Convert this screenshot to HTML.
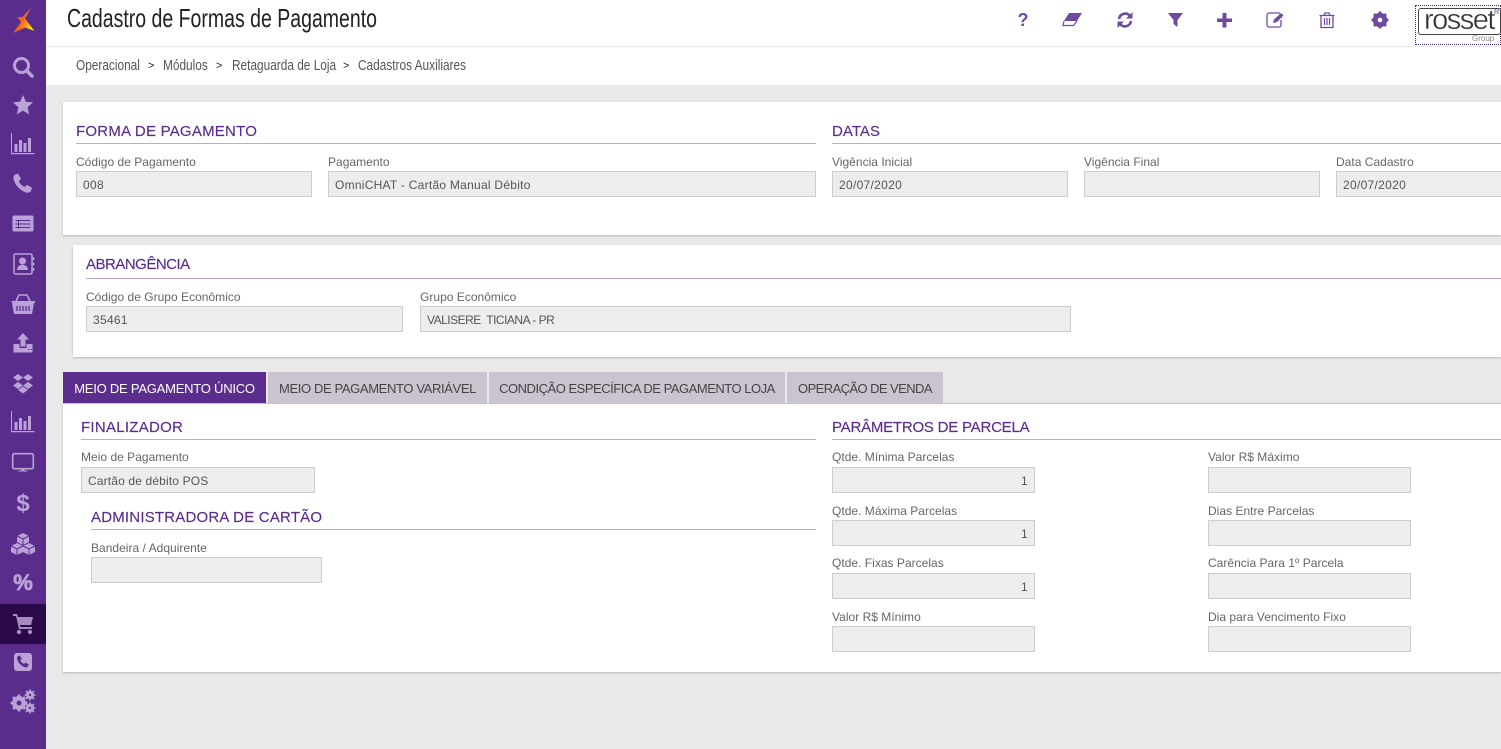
<!DOCTYPE html>
<html lang="pt-BR">
<head>
<meta charset="utf-8">
<title>Cadastro de Formas de Pagamento</title>
<style>
html,body{margin:0;padding:0;width:1501px;height:749px;overflow:hidden;background:#e9e9e9;font-family:"Liberation Sans",sans-serif}
#root{position:relative;width:1501px;height:749px;overflow:hidden}
.a{position:absolute;box-sizing:border-box;white-space:nowrap}
.side{left:0;top:0;width:46px;height:749px;background:#5a2d8c}
.act{left:0;top:604px;width:46px;height:40px;background:#2b0a4b}
.card{background:#fff;box-shadow:0 1px 2px rgba(0,0,0,.22)}
.h{font-size:15px;line-height:18px;color:#5b2d8c;height:18px;-webkit-text-stroke:.15px #5b2d8c}
.ln{height:1px;background:#c0aad4}
.l{font-size:12px;line-height:14px;color:#666;height:14px;letter-spacing:.02px}
.i{height:26px;background:#ededed;border:1px solid #ccc;font-size:12px;line-height:26px;color:#555;padding-left:6px;letter-spacing:.3px}
.r{text-align:right;padding:0 6px 0 0}
.tab{top:372px;height:31px;background:#cbc3d0;color:#444;font-size:13px;line-height:33px;text-align:center}
.bc{top:58px;font-size:15px;line-height:16px;color:#555;transform:scaleX(.79);transform-origin:0 0}
.gt{top:58px;font-size:11px;line-height:16px;color:#222}
svg{position:absolute;left:0;top:0;overflow:visible}
</style>
</head>
<body>
<div id="root">
<div class="a" style="left:46px;top:0;width:1455px;height:85px;background:#fff"></div>
<div class="a" style="left:46px;top:46px;width:1455px;height:1px;background:#eaeaea"></div>
<div class="a" style="left:67px;top:3px;font-size:26px;line-height:30px;color:#222;transform:scaleX(.75);transform-origin:0 0">Cadastro de Formas de Pagamento</div>

<div class="a bc" style="left:76px">Operacional</div><div class="a gt" style="left:148px">&gt;</div>
<div class="a bc" style="left:163px">Módulos</div><div class="a gt" style="left:216px">&gt;</div>
<div class="a bc" style="left:232px">Retaguarda de Loja</div><div class="a gt" style="left:343px">&gt;</div>
<div class="a bc" style="left:358px">Cadastros Auxiliares</div>

<!-- card 1 -->
<div class="a card" style="left:63px;top:102px;width:1438px;height:133px"></div>
<div class="a h" style="left:76px;top:123px;letter-spacing:.23px">FORMA DE PAGAMENTO</div>
<div class="a ln" style="left:76px;top:143px;width:740px"></div>
<div class="a h" style="left:832px;top:123px;letter-spacing:.05px">DATAS</div>
<div class="a ln" style="left:832px;top:143px;width:669px"></div>
<div class="a l" style="left:76px;top:155px">Código de Pagamento</div>
<div class="a i" style="left:76px;top:171px;width:236px">008</div>
<div class="a l" style="left:328px;top:155px">Pagamento</div>
<div class="a i" style="left:328px;top:171px;width:488px;letter-spacing:.26px">OmniCHAT - Cartão Manual Débito</div>
<div class="a l" style="left:832px;top:155px">Vigência Inicial</div>
<div class="a i" style="left:832px;top:171px;width:236px">20/07/2020</div>
<div class="a l" style="left:1084px;top:155px">Vigência Final</div>
<div class="a i" style="left:1084px;top:171px;width:236px"></div>
<div class="a l" style="left:1336px;top:155px">Data Cadastro</div>
<div class="a i" style="left:1336px;top:171px;width:180px">20/07/2020</div>

<!-- card 2 -->
<div class="a card" style="left:73px;top:245px;width:1428px;height:112px"></div>
<div class="a h" style="left:86px;top:256px;letter-spacing:-.5px">ABRANGÊNCIA</div>
<div class="a ln" style="left:86px;top:278px;width:1415px"></div>
<div class="a l" style="left:86px;top:290px">Código de Grupo Econômico</div>
<div class="a i" style="left:86px;top:306px;width:317px">35461</div>
<div class="a l" style="left:420px;top:290px">Grupo Econômico</div>
<div class="a i" style="left:420px;top:306px;width:651px;letter-spacing:-.5px">VALISERE&nbsp; TICIANA - PR</div>

<!-- tabs -->
<div class="a card" style="left:63px;top:403px;width:1438px;height:269px"></div>
<div class="a" style="left:63px;top:403px;width:1438px;height:1px;background:#c9bfd3"></div>
<div class="a tab" style="left:63px;width:203px;background:#5b2d8c;color:#fff;letter-spacing:-.23px">MEIO DE PAGAMENTO ÚNICO</div>
<div class="a tab" style="left:268px;width:219px;letter-spacing:-.37px">MEIO DE PAGAMENTO VARIÁVEL</div>
<div class="a tab" style="left:489px;width:296px;letter-spacing:-.48px">CONDIÇÃO ESPECÍFICA DE PAGAMENTO LOJA</div>
<div class="a tab" style="left:787px;width:156px;letter-spacing:-.58px">OPERAÇÃO DE VENDA</div>

<!-- finalizador -->
<div class="a h" style="left:81px;top:419px;letter-spacing:.27px">FINALIZADOR</div>
<div class="a ln" style="left:81px;top:439px;width:735px"></div>
<div class="a l" style="left:81px;top:450px">Meio de Pagamento</div>
<div class="a i" style="left:81px;top:467px;width:234px;letter-spacing:.15px">Cartão de débito POS</div>
<div class="a h" style="left:91px;top:509px;letter-spacing:.2px">ADMINISTRADORA DE CARTÃO</div>
<div class="a ln" style="left:91px;top:529px;width:725px"></div>
<div class="a l" style="left:91px;top:541px">Bandeira / Adquirente</div>
<div class="a i" style="left:91px;top:557px;width:231px"></div>

<!-- parametros -->
<div class="a h" style="left:832px;top:419px;letter-spacing:-.22px">PARÂMETROS DE PARCELA</div>
<div class="a ln" style="left:832px;top:439px;width:669px"></div>
<div class="a l" style="left:832px;top:450px">Qtde. Mínima Parcelas</div>
<div class="a i r" style="left:832px;top:467px;width:203px">1</div>
<div class="a l" style="left:832px;top:504px">Qtde. Máxima Parcelas</div>
<div class="a i r" style="left:832px;top:520px;width:203px">1</div>
<div class="a l" style="left:832px;top:556px">Qtde. Fixas Parcelas</div>
<div class="a i r" style="left:832px;top:573px;width:203px">1</div>
<div class="a l" style="left:832px;top:610px">Valor R$ Mínimo</div>
<div class="a i" style="left:832px;top:626px;width:203px"></div>
<div class="a l" style="left:1208px;top:450px">Valor R$ Máximo</div>
<div class="a i" style="left:1208px;top:467px;width:203px"></div>
<div class="a l" style="left:1208px;top:504px">Dias Entre Parcelas</div>
<div class="a i" style="left:1208px;top:520px;width:203px"></div>
<div class="a l" style="left:1208px;top:556px">Carência Para 1º Parcela</div>
<div class="a i" style="left:1208px;top:573px;width:203px"></div>
<div class="a l" style="left:1208px;top:610px">Dia para Vencimento Fixo</div>
<div class="a i" style="left:1208px;top:626px;width:203px"></div>

<!-- rosset -->
<div class="a" style="left:1415px;top:5px;width:86px;height:40px;border:1px dotted #3d2a6e"></div>
<div class="a" style="left:1418px;top:8px;width:83px;height:27px;border:1px solid #444;border-radius:3px;background:#fff"></div>
<div class="a" style="left:1424px;top:4px;font-size:29px;line-height:32px;color:#333;letter-spacing:-1.5px;-webkit-text-stroke:.4px #fff">rosset</div>
<div class="a" style="left:1494px;top:9px;font-size:7px;line-height:7px;color:#333">®</div>
<div class="a" style="left:1472px;top:34px;font-size:8px;line-height:9px;color:#888">Group</div>

<!-- sidebar -->
<div class="a side"></div>
<div class="a act"></div>
<svg width="1501" height="749" viewBox="0 0 1501 749">
<defs><linearGradient id="lg" x1="0" y1="0" x2="1" y2=".55"><stop offset="0" stop-color="#ee2a1c"/><stop offset=".55" stop-color="#f9641a"/><stop offset="1" stop-color="#fbdc00"/></linearGradient></defs>
<!-- logo -->
<path d="M31 8 L25 18.500 L34.500 31 L25 27.500 L13 33 L21 22 L17 17 L22.500 17 Z" fill="url(#lg)"/>
<g fill="#b9a3d6" stroke="#b9a3d6">
<g transform="translate(23,67)" fill="none" stroke-linecap="round"><circle cx="-1.5" cy="-1.5" r="7" stroke-width="3"/><path d="M4 4L9 9" stroke-width="3.6"/></g>
<path transform="translate(23,105)" stroke="none" d="M0-10L2.9-3.2 10-2.6 4.6 2.2 6.2 9.4 0 5.6-6.2 9.4-4.6 2.2-10-2.6-2.9-3.2Z"/>
<g id="ch" transform="translate(23,145)" stroke="none"><path d="M-12-12h1v20h22.500v1.200h-23.500z"/><rect x="-8.500" y="-1" width="3" height="8"/><rect x="-4" y="-5" width="3" height="12"/><rect x="0.500" y="-2" width="3" height="9"/><rect x="5" y="-7" width="3" height="14"/></g>
<path transform="translate(23,184)" stroke="none" d="M-8-9.500l3-1 3 5.500-2.200 2c1 2.800 3 4.800 6 6l2-2.200 5.200 3-1 3.200c-1 1.500-3 2-5 1.500C-3 6.500-8 1-9.500-5c-.3-2 .2-3.500 1.500-4.500z"/>
<g transform="translate(23,224)"><rect x="-10.500" y="-8.500" width="21" height="16" rx="1.500" stroke="none"/><path d="M-7.500-3.500h15M-7.500 0h15M-7.500 3.500h15M-4.500-3.500v8" stroke="#5a2d8c" stroke-width="1" fill="none"/></g>
<g transform="translate(23,264)"><rect x="-9" y="-10" width="18" height="20" rx="1.500" fill="none" stroke-width="1.500"/><circle cx="-.500" cy="-3" r="3.500" stroke="none"/><path d="M-6 6c0-7 11-7 11 0z" stroke="none"/><path d="M10.500-7v3M10.500-1.500v3M10.500 4v3" stroke-width="1.500" fill="none"/></g>
<g transform="translate(23,304)"><path d="M-12-3h24v2h-1.500L-9.500-1h-1z" stroke="none"/><path d="M-11-1h22l-2 11h-18z" stroke="none"/><path d="M-7-3L-4-9h8L7-3" fill="none" stroke-width="1.600"/><path d="M-6 2v5M-3 2v5M0 2v5M3 2v5M6 2v5" stroke="#5a2d8c" stroke-width="1.300" fill="none"/></g>
<g transform="translate(23,343)" stroke="none"><path d="M0-10l6 6.500h-3.500v7h-5v-7H-6z"/><path d="M-9.500 1h6v4h7V1h6v8.500h-19z"/><path d="M5 6.500h1.500M8 6.500h1" stroke="#5a2d8c" stroke-width="1" fill="none"/></g>
<path transform="translate(23,383)" stroke="none" d="M-5-9L0-5.500-5-2-10-5.500zM5-9L10-5.500 5-2 0-5.500zM-5-1L0 2.500-5 6-10 2.500zM5-1L10 2.500 5 6 0 2.500zM0 3.500L5 7 0 10.500-5 7z"/>
<g transform="translate(23,423)" stroke="none"><path d="M-12-12h1v20h22.500v1.200h-23.500z"/><rect x="-8.500" y="-1" width="3" height="8"/><rect x="-4" y="-5" width="3" height="12"/><rect x="0.500" y="-2" width="3" height="9"/><rect x="5" y="-7" width="3" height="14"/></g>
<g transform="translate(23,462)"><rect x="-10.300" y="-8.300" width="20.600" height="15" rx="1.500" fill="none" stroke-width="1.600"/><path d="M-1.500 7h3v1.500h3v1h-9v-1h3z" stroke="none"/></g>
<path transform="translate(23,543)" stroke="none" d="M0-10L6-7V-1L0 2-6-1V-7ZM-6 0L0 3V9L-6 12-12 9V3ZM6 0L12 3V9L6 12 0 9V3Z"/>
<path transform="translate(23,543)" d="M-6-7L0-4 6-7M0-4v6M-12 3l6 3 6-3M-6 6v6M0 3l6 3 6-3M6 6v6" stroke="#5a2d8c" stroke-width="1" fill="none"/>
<g fill="#a38dbc"><path transform="translate(23,623)" stroke="none" d="M-10-9h4l1 3h15l-2 8H-3l.5 2H9v2H-4L-7-7h-3z"/><circle cx="19" cy="632" r="2.200" stroke="none"/><circle cx="30" cy="632" r="2.200" stroke="none"/></g>
<g transform="translate(23,662)"><rect x="-9" y="-9" width="18" height="18" rx="3" stroke="none"/><path transform="scale(.62)" fill="#5a2d8c" stroke="none" d="M-8-9.500l3-1 3 5.500-2.200 2c1 2.800 3 4.800 6 6l2-2.200 5.200 3-1 3.200c-1 1.500-3 2-5 1.500C-3 6.500-8 1-9.500-5c-.3-2 .2-3.500 1.500-4.500z"/></g>
<g transform="translate(19,703)"><circle r="5.200" fill="none" stroke-width="3.500"/><path d="M0-8.500v17M-8.500 0h17M-6-6l12 12M6-6L-6 6" stroke-width="2.600" fill="none"/><circle r="2.500" fill="#5a2d8c" stroke="none"/></g>
<g transform="translate(30,695)"><circle r="3" fill="none" stroke-width="2.200"/><path d="M0-5.500v11M-5.500 0h11M-4-4l8 8M4-4l-8 8" stroke-width="1.600" fill="none"/><circle r="1.200" fill="#5a2d8c" stroke="none"/></g>
<g transform="translate(30,708)"><circle r="3" fill="none" stroke-width="2.200"/><path d="M0-5.500v11M-5.500 0h11M-4-4l8 8M4-4l-8 8" stroke-width="1.600" fill="none"/><circle r="1.200" fill="#5a2d8c" stroke="none"/></g>
</g>
<text x="23" y="511" font-family="Liberation Sans" font-weight="700" font-size="24" text-anchor="middle" fill="#b9a3d6">$</text>
<text x="23" y="590" font-family="Liberation Sans" font-weight="700" font-size="22" text-anchor="middle" fill="#b9a3d6" stroke="#b9a3d6" stroke-width=".7">%</text>

<!-- toolbar -->
<g fill="#6f4a9f" stroke="none">
<text x="1023" y="26" font-family="Liberation Sans" font-weight="700" font-size="18" text-anchor="middle">?</text>
<path d="M1069 13H1082L1077 21H1064Z"/><path d="M1064 21L1063 25.500H1073.500L1077 21" fill="none" stroke="#6f4a9f" stroke-width="1.200"/>
<g transform="translate(1125,20)" fill="none" stroke="#6f4a9f" stroke-width="2.600"><path d="M-6-1A6.200 6.200 0 0 1 5-4"/><path d="M6 1A6.200 6.200 0 0 1-5 4"/><path d="M7.500-8v6.500H1z" fill="#6f4a9f" stroke="none"/><path d="M-7.500 8V1.500H-1z" fill="#6f4a9f" stroke="none"/></g>
<path d="M1168 13h15l-5.500 7v7l-4-3v-4z"/>
<path d="M1222.500 13h4v5.500h5.500v3.500h-5.500v5.500h-4V22h-5.500v-3.500h5.500z"/>
<g transform="translate(1275,20)" fill="none" stroke="#6f4a9f"><path d="M5-7H-6a2 2 0 0 0-2 2V5a2 2 0 0 0 2 2H4a2 2 0 0 0 2-2V0" stroke-width="1.300"/><path d="M-2 3l1-3.500L6-7l2.500 2.500L2 2z" fill="#6f4a9f" stroke="none"/></g>
<g transform="translate(1327,20)" fill="none" stroke="#6f4a9f" stroke-width="1.300"><path d="M-6-4.500V7.500h12V-4.500"/><path d="M-7.500-4.500h15M-3-4.500l1-2.500h4l1 2.500"/><path d="M-2.500-2V5M0-2V5M2.500-2V5" stroke-width="1.200"/></g>
<g transform="translate(1380,20)"><circle r="5.500" fill="none" stroke="#6f4a9f" stroke-width="3.600"/><path d="M0-8.500v17M-8.500 0h17M-6-6L6 6M6-6L-6 6" stroke="#6f4a9f" stroke-width="2.800" fill="none"/><circle r="2.300" fill="#fff"/></g>
</g>
</svg>
</div>
</body>
</html>
